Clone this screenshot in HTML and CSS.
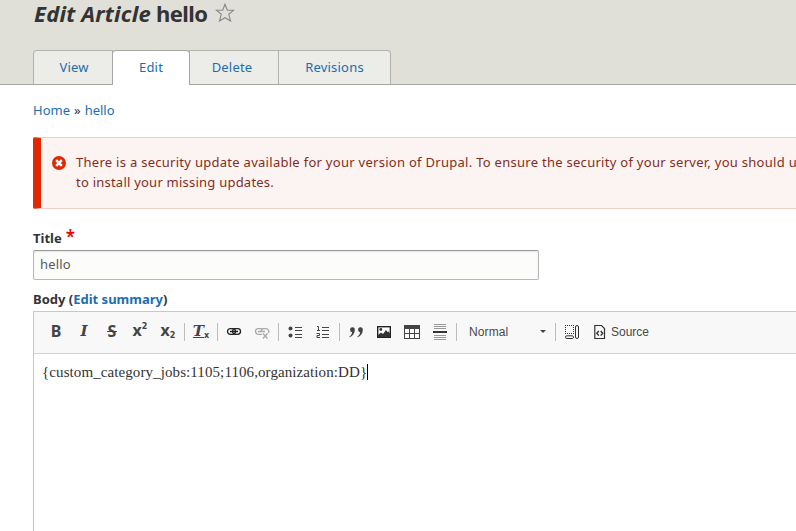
FILE: index.html
```html
<!DOCTYPE html>
<html lang="en">
<head>
<meta charset="utf-8">
<title>Edit Article hello</title>
<link rel="stylesheet" href="styles.css">
</head>
<body>
<header class="header">
  <h1 class="page-title"><em>Edit Article</em><span class="page-name">hello</span>
    <svg class="star" width="20" height="20" viewBox="0 0 20 20"><path d="M10 1.2L12.3 7.3H18.5L13.7 11.3L15.6 18L10 14.7L4.4 18L6.3 11.3L1.5 7.3H7.7Z"/></svg>
  </h1>
  <nav class="tabs">
    <a class="tab tab-view"><span>View</span></a>
    <a class="tab tab-edit active"><span>Edit</span></a>
    <a class="tab tab-delete"><span>Delete</span></a>
    <a class="tab tab-revisions"><span>Revisions</span></a>
  </nav>
</header>
<main class="content">
  <nav class="breadcrumb"><a class="crumb-home">Home</a><span>»</span><a>hello</a></nav>
  <section class="message">
    <svg class="error" width="14" height="14" viewBox="0 0 14 14"><circle cx="7" cy="7" r="7" fill="#df2a08"/><path d="M4.2 4.2L9.8 9.8M9.8 4.2L4.2 9.8" stroke="#fff" stroke-width="2.5"/></svg>
    <p><span class="line-one">There is a security update available for your version of Drupal. To ensure the security of your server, you should u</span><br><span class="line-two">to install your missing updates.</span></p>
  </section>
  <label class="label label-title">Title<span class="required">*</span></label>
  <div class="input">hello</div>
  <div class="label label-body"><span>Body (<a>Edit summary</a>)</span></div>
  <section class="editor">
    <div class="toolbar">
      <span class="btn"><b class="glyph">B</b></span>
      <span class="btn"><i class="glyph italic">I</i></span>
      <span class="btn"><span class="glyph strike">S</span></span>
      <span class="btn"><b class="glyph x">x</b><b class="tiny up">2</b></span>
      <span class="btn"><b class="glyph x">x</b><b class="tiny down">2</b></span>
      <span class="sep"></span>
      <span class="btn"><i class="glyph italic under">T</i><b class="tiny clear">x</b></span>
      <span class="sep"></span>
      <span class="btn"><svg width="16" height="16" viewBox="0 0 16 16"><g fill="none" stroke="#222" stroke-width="1.3"><rect x="1.5" y="4.7" width="8" height="5.6" rx="2.8"/><rect x="6.5" y="4.7" width="8" height="5.6" rx="2.8"/></g><path d="M4 7.5H12" stroke="#222" stroke-width="1.5"/></svg></span>
      <span class="btn"><svg width="16" height="16" viewBox="0 0 16 16"><g fill="none" stroke="#aaa" stroke-width="1.3"><path d="M8 10.3H4.3a2.8 2.8 0 0 1 0-5.6H7a2.8 2.8 0 0 1 2.2 1M7 8a2.8 2.8 0 0 1 2.5-3.3H12a2.8 2.8 0 0 1 2.2 4.5M4 7.5H11"/><path d="M9 9.5L13.5 14.5M13.5 9.5L9 14.5" stroke-width="1.5"/></g></svg></span>
      <span class="sep"></span>
      <span class="btn"><svg width="16" height="16" viewBox="0 0 16 16" fill="#444"><circle cx="3.5" cy="4.5" r="2"/><circle cx="3.5" cy="11.5" r="2"/><path d="M8 3h7v1H8zM8 6h7v1H8zM8 10h7v1H8zM8 13h7v1H8z"/></svg></span>
      <span class="btn"><svg width="16" height="16" viewBox="0 0 16 16" fill="none" stroke="#444"><path d="M7 3.5h7M7 6.5h7M7 10.5h7M7 13.5h7"/><path d="M2 2.5H3.5V6.5M2 6.5H5M1.5 9.5H4.5V11.5H2V13.5H5"/></svg></span>
      <span class="sep"></span>
      <span class="btn"><svg width="16" height="16" viewBox="0 0 16 16" fill="#444"><path id="q" d="M4 3.3a2.5 2.5 0 0 1 2.8 2.6C6.8 9.2 5 11.8 1.7 13.3L1.3 12.6C3 11.6 4 10 4.1 8.2A2.5 2.5 0 0 1 4 3.3Z"/><use href="#q" x="8"/></svg></span>
      <span class="btn"><svg width="16" height="16" viewBox="0 0 16 16"><rect x="1.7" y="2.7" width="12.6" height="10.6" fill="#fff" stroke="#222" stroke-width="1.4"/><circle cx="4.8" cy="5.5" r="1.4" fill="#333"/><path d="M2 13V11L5 8.5L7 10L10 6L11.5 8L12.5 7.5L14 9.5V13Z" fill="#333"/></svg></span>
      <span class="btn"><svg width="16" height="16" viewBox="0 0 16 16"><rect x=".5" y="1.5" width="15" height="13" fill="#fff" stroke="#444"/><path d="M0 1h16v4H0z" fill="#444"/><path d="M5.5 5V14M10.5 5V14M1 9.5H15" stroke="#444"/></svg></span>
      <span class="btn"><svg width="16" height="18" viewBox="0 0 16 18"><path d="M2 1.5H14M2 3.5H14M2 5.5H14M2 12.5H14M2 14.5H14M2 16.5H14" stroke="#999"/><path d="M1 8h14v2H1z" fill="#333"/></svg></span>
      <span class="sep"></span>
      <span class="combo"><span class="combo-text">Normal</span><svg width="6" height="3" viewBox="0 0 6 3"><path d="M0 0H6L3 3Z" fill="#444"/></svg></span>
      <span class="sep"></span>
      <span class="btn"><svg width="16" height="16" viewBox="0 0 16 16" fill="none" stroke="#333"><path d="M1 1.5H10M1 9.5H10M1.5 1V10M9.5 1V10" stroke-dasharray="1 1"/><rect x="11.5" y="1.5" width="3" height="13" rx="1.5"/><rect x="1.5" y="11.8" width="8" height="2.7" rx="1.3"/></svg></span>
      <span class="source"><svg width="12" height="16" viewBox="0 0 12 16" fill="none" stroke="#333"><path d="M.8 1.5H7.5L10.5 4.5V14.5H.8Z" stroke-width="1.2"/><path d="M4.8 7L2.8 9.3L4.8 11.6M6.7 7L8.7 9.3L6.7 11.6" stroke-width="1.4"/></svg><span class="source-text">Source</span></span>
    </div>
    <div class="document"><span class="doc-text">{custom_category_jobs:1105;1106,organization:DD}</span><span class="caret"></span></div>
  </section>
</main>
</body>
</html>
```
FILE: styles.css
```css
* { box-sizing: border-box; }
body { margin: 0; width: 796px; height: 531px; overflow: hidden; background: #fff; color: #333; font: 13px/20px "Noto Sans", sans-serif; }
a { color: #1a6eb0; }
.header { height: 85px; padding-left: 33px; background: #e0e0d8; border-bottom: 1px solid #a6a6a2; }
.page-title { display: flex; align-items: center; height: 50px; margin: 0; padding-bottom: 24px; font-size: 22px; line-height: 28px; white-space: nowrap; }
.page-title em { width: 123px; padding-left: 1px; letter-spacing: .2px; }
.page-name { width: 59px; letter-spacing: -.6px; }
.star { fill: none; stroke: #888; stroke-width: 1.1; }
.tabs { display: flex; height: 35px; }
.tab { display: flex; align-items: center; justify-content: center; height: 34px; padding-bottom: 2px; border: 1px solid #b3b3ae; border-bottom: 0; margin-right: -1px; background: #ecece8; letter-spacing: .2px; }
.tab-view { width: 80px; border-top-left-radius: 4px; padding-left: 2px; }
.tab-edit { width: 78px; }
.tab-delete { width: 90px; padding-right: 4px; }
.tab-revisions { width: 113px; border-top-right-radius: 4px; }
.tab.active { position: relative; height: 35px; padding-bottom: 3px; background: #fff; border-color: #a6a6a2; border-radius: 4px 4px 0 0; }
.content { padding-left: 33px; }
.breadcrumb { display: flex; gap: 4px; padding: 15px 0; height: 52px; }
.message { display: flex; height: 72px; padding: 14px 0 0 10px; border: 1px solid #f0cfc8; border-left: 8px solid #e32700; border-right: 0; border-radius: 2px 0 0 2px; background: #fcf4f2; overflow: hidden; white-space: nowrap; }
.error { flex: none; margin: 4px 10px 0 1px; }
.message p { margin: 0; color: #852c1c; }
.line-one { letter-spacing: .28px; }
.line-two { letter-spacing: .23px; }
.label { display: flex; font-weight: 700; }
.label-title { height: 41px; padding-top: 19px; }
.required { margin-left: 4px; color: #e00; font-size: 17px; font-weight: 600; line-height: 18px; }
.input { width: 506px; height: 30px; padding: 3px 6px; border: 1px solid #b8b8b8; border-top-color: #999; border-radius: 2px; background: #fcfcfa; box-shadow: inset 0 1px 2px rgba(0,0,0,.1); color: #595959; letter-spacing: .2px; }
.label-body { height: 31px; padding-top: 9px; }
.editor { height: 230px; border: 1px solid #c8c8c8; border-right: 0; }
.toolbar { display: flex; align-items: center; height: 42px; padding: 0 0 2px 8px; border-bottom: 1px solid #d1d1d1; background: #f8f8f8; }
.btn { display: flex; flex: none; align-items: center; justify-content: center; width: 28px; height: 28px; color: #444; }
.glyph { font: 700 16px/18px "Noto Sans", sans-serif; padding-bottom: 1px; }
.strike { padding: 0 1px 1px; background: linear-gradient(#444, #444) center 9px / 100% 1px no-repeat; }
.italic { font: italic 700 15px/18px "DejaVu Serif", serif; }
.x { line-height: 16px; padding-bottom: 3px; }
.tiny { font: 700 8px/8px "DejaVu Sans", sans-serif; }
.up { margin-bottom: 9px; }
.down { margin-top: 9px; }
.under { text-decoration: underline; text-underline-offset: 1px; text-decoration-thickness: 1px; }
.clear { margin-top: 8px; }
.sep { flex: none; width: 1px; height: 18px; margin: 0 2px; background: #bcbcbc; }
.combo { display: flex; align-items: center; width: 94px; padding-left: 10px; font: 12px/18px "Liberation Sans", sans-serif; color: #484848; }
.combo-text { width: 71px; letter-spacing: .1px; }
.source { display: flex; align-items: center; gap: 5px; padding-left: 8px; font: 12px/18px "Liberation Sans", sans-serif; color: #484848; }
.document { display: flex; align-items: center; padding: 8px 0 0 8px; font: 15px/20px "Liberation Serif", serif; letter-spacing: .09px; color: #333; }
.caret { width: 1px; height: 16px; background: #000; }
```
